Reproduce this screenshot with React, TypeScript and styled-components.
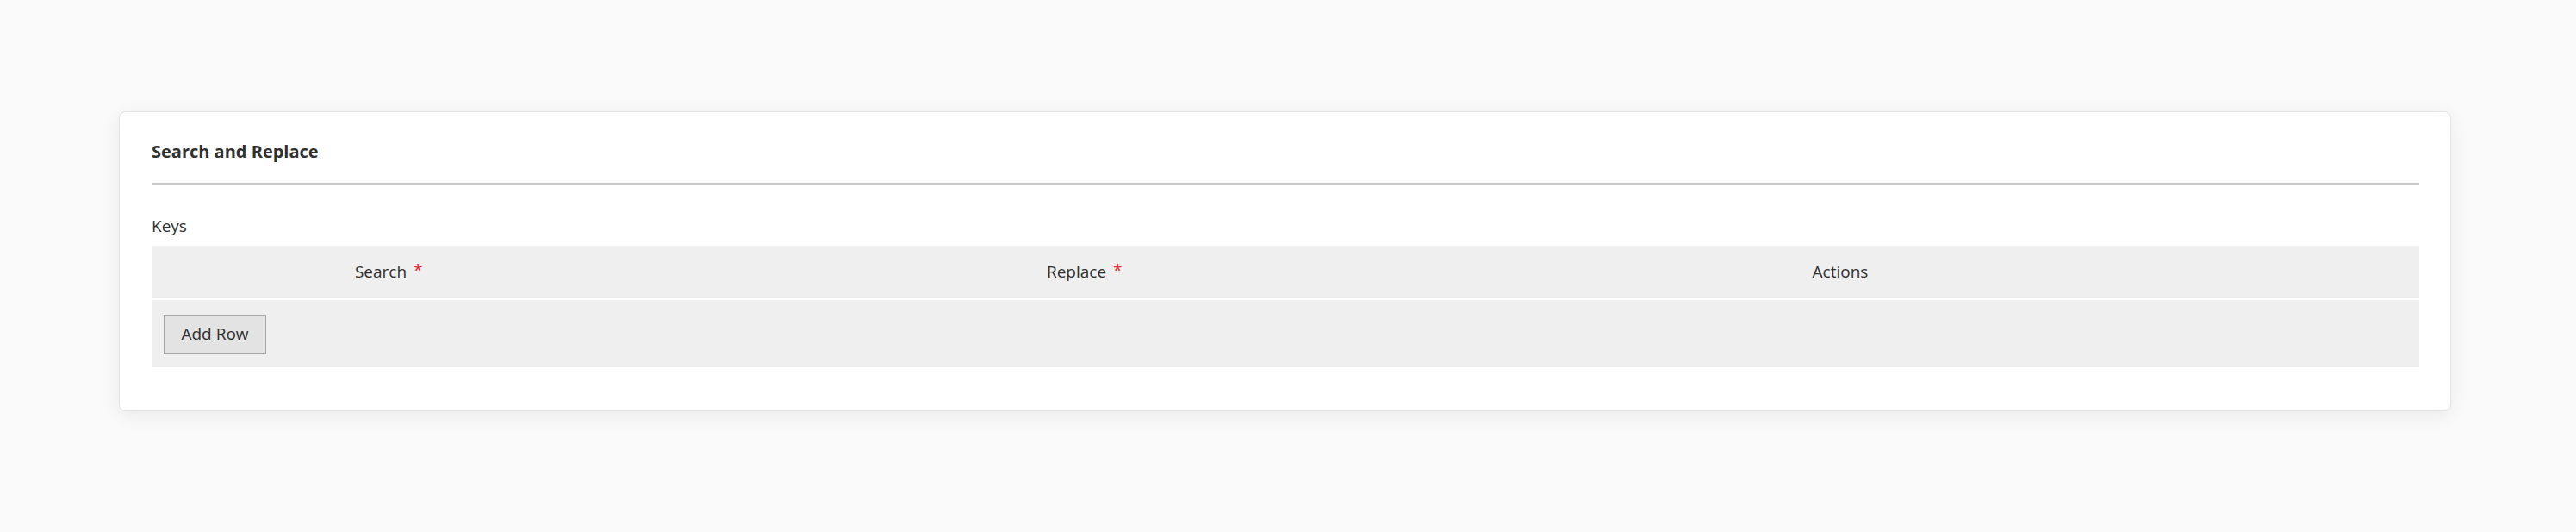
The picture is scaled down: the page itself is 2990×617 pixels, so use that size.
import * as React from "react";
import styled, { createGlobalStyle } from "styled-components";

const GlobalStyle = createGlobalStyle`
  html, body {
    margin: 0;
    padding: 0;
    background: #fafafa;
    font-family: "Open Sans", "Noto Sans", sans-serif;
    color: #303030;
  }
`;

const Page = styled.div`
  box-sizing: border-box;
  height: 617px;
  padding: 129px 145px 0 138px;
`;

const Card = styled.section`
  background: #ffffff;
  border: 1px solid #e4e4e4;
  border-radius: 8px;
  box-shadow: 0 5px 22px rgba(0, 0, 0, 0.07);
  padding: 34px 36px 50px 37px;
`;

const Title = styled.header`
  border-bottom: 2px solid #c8c8c8;
  font-size: 20px;
  font-weight: 700;
  line-height: 24px;
  padding-bottom: 24px;
`;

const Label = styled.div`
  font-size: 19px;
  line-height: 23px;
  margin: 37px 0 11px;
`;

const Table = styled.div`
  display: flex;
  flex-direction: column;
  gap: 2px;
`;

const HeaderRow = styled.div`
  align-items: center;
  background: #efefef;
  display: grid;
  grid-template-columns: 532fr 1083fr 690fr 327fr;
  height: 61px;
`;

const HeaderCell = styled.div`
  font-size: 19px;
  font-weight: 500;
  line-height: 23px;
  text-align: center;
`;

const HeaderText = styled.span<{ $required?: boolean }>`
  position: relative;

  &::after {
    color: #e22626;
    content: ${(p) => (p.$required ? "'*'" : "none")};
    left: 100%;
    margin-left: 8px;
    position: absolute;
    top: 0;
  }
`;

const BodyRow = styled.div`
  background: #efefef;
  box-sizing: border-box;
  display: flex;
  height: 78px;
  padding: 17px 14px 0;
`;

const Button = styled.button`
  background: #e3e3e3;
  border: 1px solid #a8a8a8;
  color: #303030;
  cursor: pointer;
  font-family: "Open Sans", "Noto Sans", sans-serif;
  font-size: 19px;
  height: 45px;
  line-height: 23px;
  padding: 0 19px;
  width: 119px;
`;

const columns = [
  { label: "Search", required: true },
  { label: "Replace", required: true },
  { label: "Actions", required: false },
  { label: "", required: false },
];

export default function App() {
  return (
    <>
      <GlobalStyle />
      <Page>
        <Card>
          <Title>Search and Replace</Title>
          <Label>Keys</Label>
          <Table>
            <HeaderRow>
              {columns.map((col, i) => (
                <HeaderCell key={i}>
                  <HeaderText $required={col.required}>{col.label}</HeaderText>
                </HeaderCell>
              ))}
            </HeaderRow>
            <BodyRow>
              <Button type="button">Add Row</Button>
            </BodyRow>
          </Table>
        </Card>
      </Page>
    </>
  );
}
